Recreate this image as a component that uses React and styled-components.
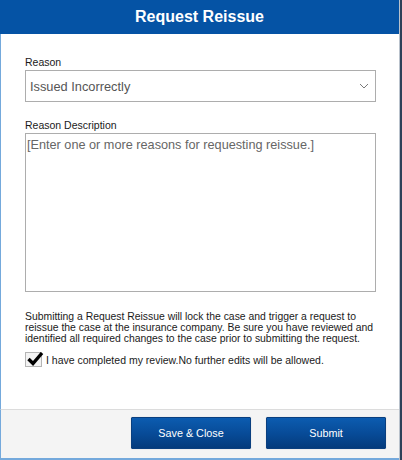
import React from "react";
import styled, { createGlobalStyle } from "styled-components";

const GlobalStyle = createGlobalStyle`
  html, body {
    margin: 0;
    padding: 0;
    background: #ffffff;
  }
  body {
    font-family: "Liberation Sans", Arial, sans-serif;
  }
`;

const Frame = styled.div`
  width: 402px;
  height: 460px;
  display: flex;
  background: #2e4059;
  box-sizing: border-box;
  padding-right: 2px;
`;

const Dialog = styled.div`
  flex: 1;
  display: flex;
  flex-direction: column;
  background: #ffffff;
  border-right: 1px solid #b9c2cc;
`;

const Header = styled.div`
  height: 34px;
  flex-shrink: 0;
  background: #0553a5;
  color: #ffffff;
  font-size: 16px;
  font-weight: bold;
  display: flex;
  align-items: center;
  justify-content: center;
  padding-bottom: 1px;
  box-sizing: border-box;
`;

const Body = styled.div`
  flex: 1;
  border-left: 1px solid #74a9dc;
  padding: 22px 23px 0 24px;
  display: flex;
  flex-direction: column;
`;

const Label = styled.div`
  font-size: 10.5px;
  line-height: 12px;
  color: #1a1a1a;
  margin-bottom: ${(p) => p.$gap || 2}px;
`;

const Select = styled.div`
  height: 32px;
  box-sizing: border-box;
  border: 1px solid #adadad;
  display: flex;
  align-items: center;
  justify-content: space-between;
  padding: 0 6px 0 4px;
  font-size: 12.8px;
  color: #555555;
  margin-bottom: 17px;
`;

const TextArea = styled.div`
  height: 159px;
  box-sizing: border-box;
  border: 1px solid #adadad;
  padding: 4px 1px;
  font-size: 12.7px;
  line-height: 15px;
  color: #666666;
  margin-bottom: 19px;
`;

const Notice = styled.p`
  margin: 0 0 8px;
  font-size: 10.4px;
  line-height: 11px;
  color: #1a1a1a;
`;

const CheckRow = styled.label`
  display: flex;
  align-items: center;
  gap: 4px;
  font-size: 10.5px;
  color: #1a1a1a;
`;

const Box = styled.span`
  position: relative;
  width: 17px;
  height: 15px;
  box-sizing: border-box;
  border: 1px solid #b5b5b5;
  background: #f3f3f3;
  flex-shrink: 0;

  svg {
    position: absolute;
    left: 0px;
    top: -3px;
  }
`;

const Footer = styled.div`
  height: 51px;
  flex-shrink: 0;
  box-sizing: border-box;
  background: #f4f4f4;
  border-top: 1px solid #dcdcdc;
  border-left: 1px solid #74a9dc;
  border-bottom: 2px solid #74a9dc;
  display: flex;
  justify-content: flex-end;
  align-items: flex-start;
  gap: 15px;
  padding: 7px 13px 0 0;
`;

const Button = styled.button`
  width: 120px;
  height: 32px;
  border: 1px solid #0a3f7f;
  border-radius: 1px;
  background: linear-gradient(to bottom, #0c5cb0 0%, #074a96 55%, #043b7c 100%);
  color: #ffffff;
  font-family: "Liberation Sans", Arial, sans-serif;
  font-size: 10.8px;
  box-shadow: 0 0 1px rgba(0, 0, 0, 0.25);
  cursor: pointer;
`;

const Chevron = () => (
  <svg width="10" height="6" viewBox="0 0 10 6">
    <path d="M1 1 L5 5 L9 1" fill="none" stroke="#7a7a7a" strokeWidth="1" />
  </svg>
);

const Check = () => (
  <svg width="18" height="17" viewBox="0 0 18 17">
    <path
      d="M2.5 9 L7 13.5 L16 3"
      fill="none"
      stroke="#000000"
      strokeWidth="3.4"
      strokeLinecap="butt"
      strokeLinejoin="miter"
    />
  </svg>
);

const App = () => {
  return (
    <>
      <GlobalStyle />
      <Frame>
        <Dialog>
          <Header>Request Reissue</Header>
          <Body>
            <Label>Reason</Label>
            <Select>
              <span>Issued Incorrectly</span>
              <Chevron />
            </Select>
            <Label $gap={2}>Reason Description</Label>
            <TextArea>[Enter one or more reasons for requesting reissue.]</TextArea>
            <Notice>
              Submitting a Request Reissue will lock the case and trigger a request to
              reissue the case at the insurance company. Be sure you have reviewed and
              identified all required changes to the case prior to submitting the request.
            </Notice>
            <CheckRow>
              <Box>
                <Check />
              </Box>
              I have completed my review.No further edits will be allowed.
            </CheckRow>
          </Body>
          <Footer>
            <Button>Save &amp; Close</Button>
            <Button>Submit</Button>
          </Footer>
        </Dialog>
      </Frame>
    </>
  );
};

export default App;
